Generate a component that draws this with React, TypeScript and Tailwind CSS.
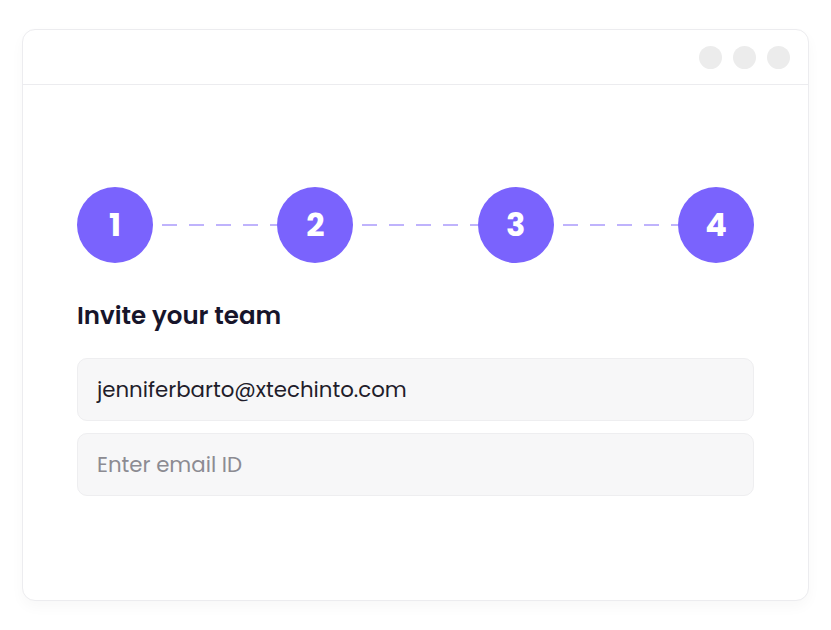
const STEPS = [1, 2, 3, 4];

function Dashes() {
  return (
    <div className="h-[2px] flex-1 bg-[repeating-linear-gradient(90deg,transparent_0_9px,#bfb3fc_9px_24px,transparent_24px_27px)]" />
  );
}

export default function App() {
  return (
    <div className="min-h-[630px] w-[831px] bg-white pl-[22px] pt-[29px] font-['Poppins','Inter','Noto_Sans',sans-serif]">
      <div className="w-[787px] h-[572px] rounded-[13px] border border-[#ececef] bg-white shadow-[0_6px_14px_rgba(0,0,0,0.03)]">
        <div className="flex h-[55px] items-center justify-end gap-[11px] border-b border-[#ececef] pr-[18px]">
          <span className="h-[23px] w-[23px] rounded-full bg-[#ececec]" />
          <span className="h-[23px] w-[23px] rounded-full bg-[#ececec]" />
          <span className="h-[23px] w-[23px] rounded-full bg-[#ececec]" />
        </div>
        <div className="px-[54px] pt-[102px]">
          <div className="flex items-center">
            {STEPS.map((n, i) => (
              <div key={n} className="contents">
                {i > 0 && <Dashes />}
                <div className="flex h-[76px] w-[76px] items-center justify-center rounded-full bg-[#7a63fd] text-[32px] font-bold text-white">
                  {n}
                </div>
              </div>
            ))}
          </div>
          <h2 className="mt-[36px] text-[24.5px] leading-[34px] font-semibold text-[#17152b]">Invite your team</h2>
          <div className="mt-[25px] flex flex-col gap-[12px]">
            <div className="flex h-[63px] items-center rounded-[10px] border border-[#eeeef0] bg-[#f7f7f8] px-[19px] text-[21.3px] text-[#1f1d2b]">
              jenniferbarto@xtechinto.com
            </div>
            <div className="flex h-[63px] items-center rounded-[10px] border border-[#eeeef0] bg-[#f7f7f8] px-[19px] text-[21.3px] text-[#8c8b92]">
              Enter email ID
            </div>
          </div>
        </div>
      </div>
    </div>
  );
}
